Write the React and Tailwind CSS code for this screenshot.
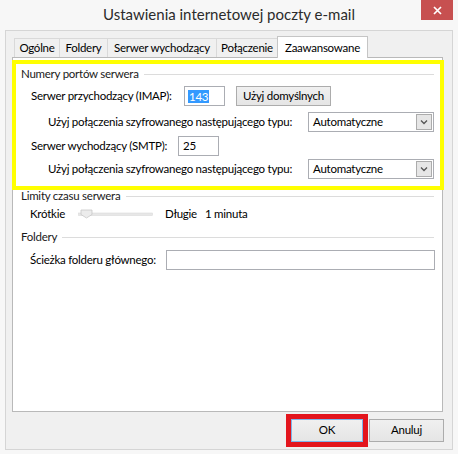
export default function App() {
  const Chevron = () => (
    <div className="w-[16px] h-[16px] border border-[#acacac] bg-[#e6e6e6] flex items-center justify-center">
      <svg width="8" height="6" viewBox="0 0 8 6">
        <polyline points="1,1.5 4,4.5 7,1.5" fill="none" stroke="#555" strokeWidth="1.3" />
      </svg>
    </div>
  );
  const Select = () => (
    <div className="w-[126px] h-[20px] border border-[#abadb3] bg-white flex items-center justify-between pl-[4px] pr-[1px]">
      <span>Automatyczne</span>
      <Chevron />
    </div>
  );
  const GroupHead = ({ label, gap, className }) => (
    <div className={"h-[16px] flex items-center pl-[8px] pr-[8px] " + className}>
      <span className="text-[#1a1a1a]">{label}</span>
      <div className={"flex-1 h-px bg-[#dcdcdc] " + gap} />
    </div>
  );
  const tab = "h-[19px] -ml-px first:ml-0 border border-b-0 border-[#d9d9d9] bg-[#f0f0f0] flex items-center justify-center";
  return (
    <div className="w-[458px] h-[454px] bg-[#f7f7f7] font-['Lato',sans-serif] text-[11.5px] tracking-[-0.25px] text-black whitespace-nowrap flex flex-col">
      <div className="h-[30px] grid grid-cols-[1fr_auto_1fr] items-start">
        <div />
        <div className="text-[15px] tracking-normal leading-[28px] text-[#2b2b2b]">Ustawienia internetowej poczty e-mail</div>
        <div className="flex justify-end pr-[5px]">
          <div className="w-[32px] h-[20px] bg-[#c75050] flex items-center justify-center">
            <svg width="9" height="9" viewBox="0 0 9 9">
              <path d="M1 1 L8 8 M8 1 L1 8" stroke="white" strokeWidth="1.7" />
            </svg>
          </div>
        </div>
      </div>
      <div className="mx-[5px] h-[420px] border border-[#d5d5d5] bg-[#f0f0f0] flex flex-col pl-[6px] pt-[5px]">
        <div className="h-[21px] flex items-end pl-[2px] leading-none">
          <div className={tab + " w-[46px]"}>Ogólne</div>
          <div className={tab + " w-[49px]"}>Foldery</div>
          <div className={tab + " w-[110px]"}>Serwer wychodzący</div>
          <div className={tab + " w-[62px]"}>Połączenie</div>
          <div className="relative z-10 -ml-px w-[91px] h-[22px] -mb-px bg-white border border-b-0 border-[#c5c5c5] flex items-start justify-center pt-[5px]">Zaawansowane</div>
        </div>
        <div className="relative w-[431px] h-[355px] border border-[#b9b9b9] bg-white flex flex-col">
          <div className="absolute left-[-1px] top-[2px] w-[432px] h-[130px] border-4 border-[#ffff00] pointer-events-none" />
          <GroupHead label="Numery portów serwera" gap="ml-[5px]" className="mt-[8px]" />
          <div className="mt-[4px] h-[20px] flex items-center pl-[18px]">
            <span className="w-[153px]">Serwer przychodzący (IMAP):</span>
            <div className="w-[41px] h-[20px] border border-[#abadb3] bg-white flex items-center pl-[3px]">
              <span className="bg-[#3399ff] text-white px-px leading-[13px]">143</span>
            </div>
            <div className="ml-[11px] w-[95px] h-[20px] border border-[#acacac] bg-gradient-to-b from-[#f0f0f0] to-[#e5e5e5] flex items-center justify-center">Użyj domyślnych</div>
          </div>
          <div className="mt-[6px] h-[20px] flex items-center pl-[35px]">
            <span className="w-[260px]">Użyj połączenia szyfrowanego następującego typu:</span>
            <Select />
          </div>
          <div className="mt-[4px] h-[20px] flex items-center pl-[18px]">
            <span className="w-[147px]">Serwer wychodzący (SMTP):</span>
            <div className="w-[41px] h-[20px] border border-[#abadb3] bg-white flex items-center pl-[4px]">25</div>
          </div>
          <div className="mt-[3px] h-[20px] flex items-center pl-[35px]">
            <span className="w-[260px]">Użyj połączenia szyfrowanego następującego typu:</span>
            <Select />
          </div>
          <GroupHead label="Limity czasu serwera" gap="ml-[6px]" className="mt-[9px]" />
          <div className="mt-[2px] h-[16px] flex items-center pl-[17px]">
            <span className="w-[48px]">Krótkie</span>
            <svg width="75" height="14" viewBox="0 0 75 14">
              <rect x="0.5" y="6" width="74" height="2.5" fill="#e7e7e7" stroke="#dadada" strokeWidth="0.6" />
              <polygon points="3,3 14,3 14,7.5 8.5,11 3,7.5" fill="#ececec" stroke="#c8c8c8" strokeWidth="0.8" />
            </svg>
            <span className="ml-[12px] w-[40px]">Długie</span>
            <span>1 minuta</span>
          </div>
          <GroupHead label="Foldery" gap="ml-[5px]" className="mt-[7px]" />
          <div className="mt-[5px] h-[20px] flex items-center pl-[17px]">
            <span className="w-[136px]">Ścieżka folderu głównego:</span>
            <div className="w-[269px] h-[20px] border border-[#abadb3] bg-white" />
          </div>
        </div>
        <div className="mt-[1px] h-[34px] flex items-center justify-end pr-[8px]">
          <div className="border-[5px] border-[#e3151d]">
            <div className="w-[72px] h-[23px] border border-[#7eb4ea] bg-gradient-to-b from-[#f0f0f0] to-[#e5e5e5] flex items-center justify-center">OK</div>
          </div>
          <div className="ml-[1px] w-[75px] h-[23px] border border-[#acacac] bg-gradient-to-b from-[#f0f0f0] to-[#e5e5e5] flex items-center justify-center">Anuluj</div>
        </div>
      </div>
    </div>
  );
}
